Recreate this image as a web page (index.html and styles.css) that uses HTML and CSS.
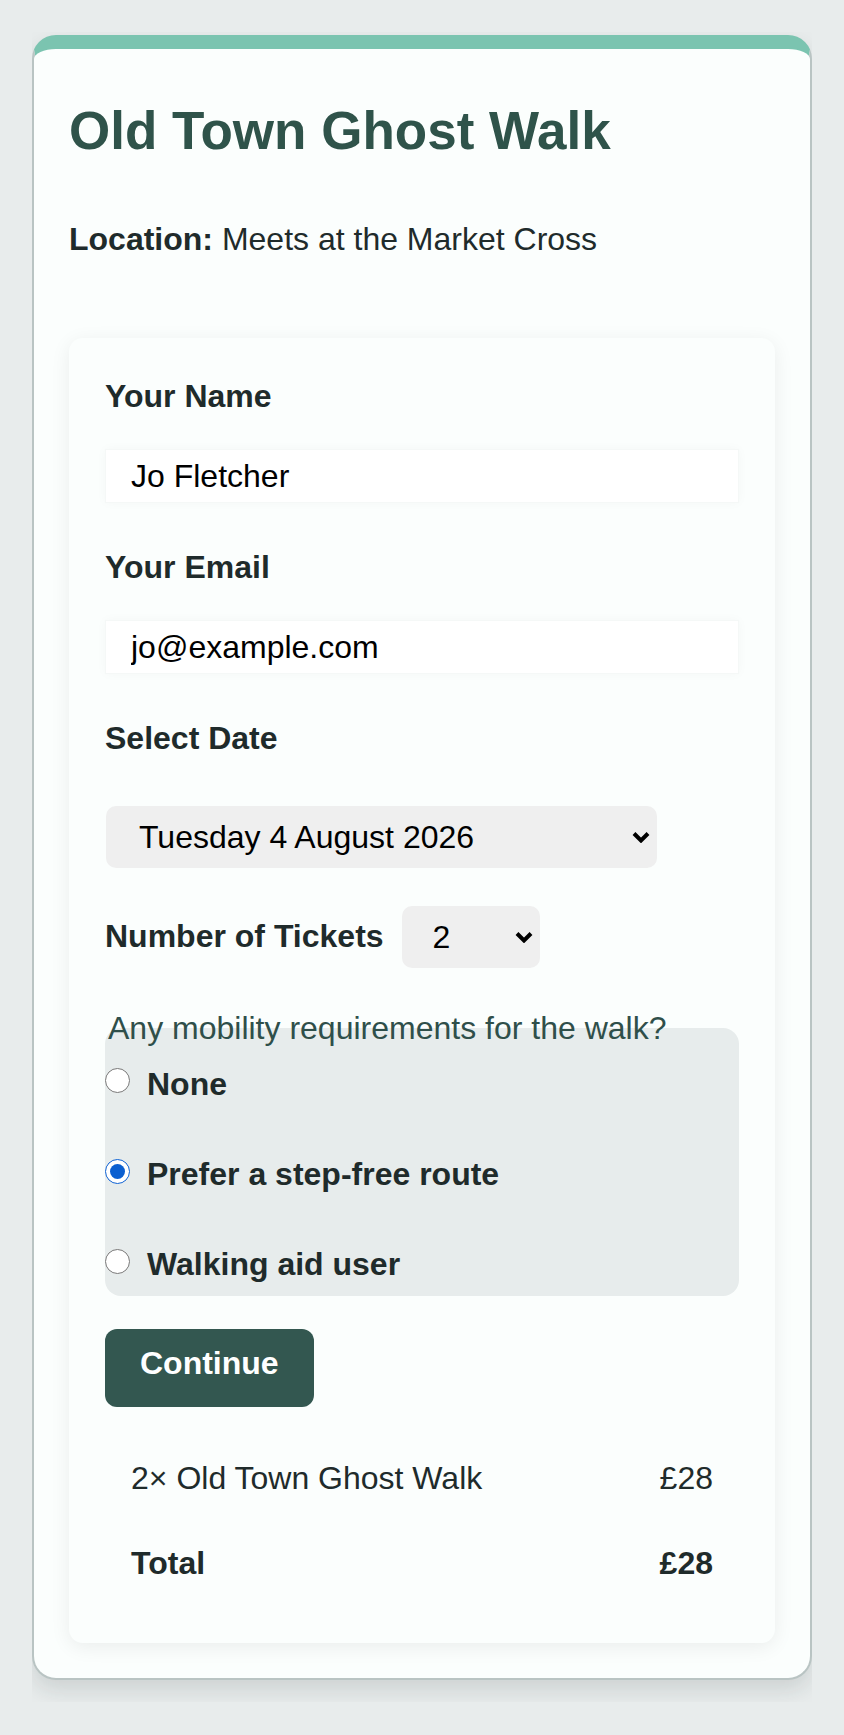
FILE: index.html
```html
<!DOCTYPE html>
<html lang="en">
<head>
  <meta charset="UTF-8">
  <title>Old Town Ghost Walk – Booking</title>
  <meta name="viewport" content="width=device-width,initial-scale=1">
  <link rel="stylesheet" href="styles.css">
</head>
<body>
  <div class="page">
    <main class="card">
      <h1>Old Town Ghost Walk</h1>
      <p class="location"><strong>Location:</strong> Meets at the Market Cross</p>

      <!-- Booking form -->
      <form class="booking">
        <div class="field">
          <label for="name">Your Name</label>
          <input id="name" type="text" value="Jo Fletcher">
        </div>
        <div class="field">
          <label for="email">Your Email</label>
          <input id="email" type="email" value="jo@example.com">
        </div>
        <div class="field field-date">
          <label for="date">Select Date</label>
          <div class="select-wrap select-date">
            <select id="date">
              <option selected>Tuesday 4 August 2026</option>
              <option>Friday 7 August 2026</option>
              <option>Saturday 8 August 2026</option>
            </select>
            <svg class="chevron" width="18" height="12" viewBox="0 0 18 12"><polyline points="2,2.5 9,9.5 16,2.5" fill="none" stroke="#000" stroke-width="4"/></svg>
          </div>
        </div>
        <div class="field field-inline">
          <label for="tickets">Number of Tickets</label>
          <div class="select-wrap select-small">
            <select id="tickets">
              <option>1</option>
              <option selected>2</option>
              <option>3</option>
              <option>4</option>
            </select>
            <svg class="chevron" width="18" height="12" viewBox="0 0 18 12"><polyline points="2,2.5 9,9.5 16,2.5" fill="none" stroke="#000" stroke-width="4"/></svg>
          </div>
        </div>

        <fieldset class="mobility">
          <legend>Any mobility requirements for the walk?</legend>
          <label class="option"><input type="radio" name="mobility" value="none"> None</label>
          <label class="option"><input type="radio" name="mobility" value="step-free" checked> Prefer a step-free route</label>
          <label class="option"><input type="radio" name="mobility" value="aid"> Walking aid user</label>
        </fieldset>

        <button type="button" class="continue">Continue</button>

        <table class="summary">
          <tr>
            <td>2× Old Town Ghost Walk</td>
            <td class="price">£28</td>
          </tr>
          <tr class="total">
            <td>Total</td>
            <td class="price">£28</td>
          </tr>
        </table>
      </form>
    </main>
  </div>
</body>
</html>
```

FILE: styles.css
```css
:root {
  --bg: #e8ecec;
  --card-bg: #fbfefd;
  --teal: #7bc4b0;
  --green: #2f534a;
  --button: #335750;
  --text: #1f2b2b;
  --muted-bg: #e7ecec;
}
body {
  margin: 0;
  background: var(--bg);
  font-family: "Liberation Sans", Arial, sans-serif;
  color: var(--text);
  line-height: 1.15;
}
.page {
  margin: 32px;
  padding: 3px 0 22px;
  overflow: hidden;
}
.card {
  display: block;
  background: var(--card-bg);
  border: 2px solid #b9c4c3;
  border-top: 14px solid var(--teal);
  border-radius: 24px;
  padding: 36px 35px 35px;
  box-shadow: 0 10px 22px rgba(20, 40, 40, 0.13);
}
h1 {
  margin: 16px 0 0;
  font-size: 53px;
  line-height: 1.15;
  color: var(--green);
}
.location {
  margin: 59px 0 0;
  font-size: 32px;
}
.booking {
  margin-top: 80px;
  background: var(--card-bg);
  border-radius: 14px;
  padding: 40px 36px 38px;
  box-shadow: 0 4px 20px rgba(0, 0, 0, 0.07);
}
.field { margin-bottom: 45.5px; }
.field label {
  display: block;
  font-size: 32px;
  font-weight: bold;
  margin-bottom: 34px;
}
.field input {
  display: block;
  width: 100%;
  box-sizing: border-box;
  font-family: inherit;
  font-size: 32px;
  line-height: 1.15;
  color: #000;
  background: #fff;
  border: 1px solid #f5f8f7;
  box-shadow: 0 0 10px rgba(0, 0, 0, 0.03);
  padding: 8px 25px;
  outline: none;
}
.field-date { margin-bottom: 38px; }
.field-date .select-wrap { margin-top: 15px; }
.field-inline {
  display: flex;
  align-items: center;
  gap: 17px;
  margin-bottom: 42px;
}
.field-inline label { margin-bottom: 0; }
.select-wrap {
  position: relative;
  display: inline-block;
  margin-left: 1px;
}
.select-wrap select {
  appearance: none;
  -webkit-appearance: none;
  display: block;
  box-sizing: border-box;
  font-family: inherit;
  font-size: 32px;
  color: #000;
  background: #efefef;
  border: none;
  border-radius: 10px;
  padding: 13px 44px 13px 33px;
  outline: none;
}
.select-date select { width: 551px; }
.select-small select { width: 138px; padding-left: 31px; }
.chevron {
  position: absolute;
  right: 7px;
  top: 50%;
  margin-top: -6px;
  pointer-events: none;
}
.mobility {
  margin: 0 0 33px;
  padding: 0 0 13px;
  border: none;
  border-radius: 16px;
  background: var(--muted-bg);
  min-width: 0;
}
.mobility legend {
  font-size: 32px;
  color: #2f4f4a;
  padding: 0 3px;
}
.option {
  display: flex;
  align-items: center;
  gap: 17px;
  font-size: 32px;
  font-weight: bold;
  margin-top: 53.5px;
}
.mobility legend + .option { margin-top: 19px; }
.option input {
  width: 25px;
  height: 25px;
  margin: 0 0 6px;
  accent-color: #0b5fd0;
}
.continue {
  display: block;
  font-family: inherit;
  font-size: 32px;
  font-weight: bold;
  line-height: 1.15;
  color: #fff;
  background: var(--button);
  border: none;
  border-radius: 12px;
  padding: 16px 35px 25px;
  cursor: pointer;
}
.summary {
  width: 100%;
  border-collapse: collapse;
  margin-top: 29px;
  font-size: 32px;
}
.summary td { padding: 24px 26px; }
.summary .price { text-align: right; }
.summary .total td { font-weight: bold; }
```
